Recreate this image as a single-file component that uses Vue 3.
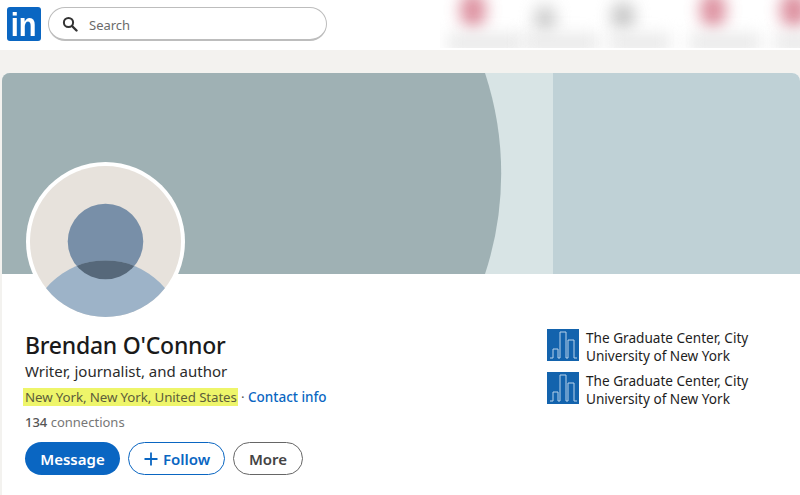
<script setup>
const schools = [
  { id: 1, name: 'The Graduate Center, City University of New York' },
  { id: 2, name: 'The Graduate Center, City University of New York' }
]

const blobs = [
  { id: 1, left: 20, top: -8, w: 26, h: 36, color: '#d67a8c' },
  { id: 2, left: 94, top: 5, w: 22, h: 28, color: '#c4c4c4' },
  { id: 3, left: 171, top: 2, w: 24, h: 28, color: '#bcbcbc' },
  { id: 4, left: 260, top: -8, w: 26, h: 36, color: '#d67a8c' },
  { id: 5, left: 340, top: -8, w: 28, h: 36, color: '#d67a8c' }
]

const smudges = [
  { id: 1, left: 8, w: 74 },
  { id: 2, left: 84, w: 74 },
  { id: 3, left: 170, w: 60 },
  { id: 4, left: 250, w: 70 },
  { id: 5, left: 335, w: 40 }
]
</script>

<template>
  <div class="page">
    <header class="topbar">
      <div class="logo"><span>in</span></div>
      <div class="search">
        <svg class="search-icon" viewBox="0 0 16 16" width="16" height="16">
          <circle cx="6.5" cy="6.5" r="4.6" fill="none" stroke="#333" stroke-width="2" />
          <path d="M10 10l4.5 4.5" stroke="#333" stroke-width="2.4" stroke-linecap="round" />
        </svg>
        <span>Search</span>
      </div>
      <div class="blurred">
        <span
          v-for="b in blobs"
          :key="b.id"
          class="blob"
          :style="{ left: b.left + 'px', top: b.top + 'px', width: b.w + 'px', height: b.h + 'px', background: b.color }"
        ></span>
        <span
          v-for="s in smudges"
          :key="s.id"
          class="smudge"
          :style="{ left: s.left + 'px', width: s.w + 'px' }"
        ></span>
      </div>
    </header>

    <main class="content">
      <section class="card">
        <svg class="banner" viewBox="0 0 798 201" width="798" height="201" preserveAspectRatio="none">
          <rect width="798" height="201" fill="#bfd1d6" />
          <rect width="551" height="201" fill="#d8e4e5" />
          <path d="M0 0H483A320 320 0 0 1 483 201H0Z" fill="#9fb1b4" />
        </svg>

        <div class="body">
          <div class="left">
            <svg class="avatar" viewBox="0 0 160 160" width="159" height="159">
              <defs>
                <clipPath id="inner"><circle cx="80" cy="80" r="76" /></clipPath>
                <clipPath id="head"><circle cx="80" cy="80" r="38" /></clipPath>
              </defs>
              <circle cx="80" cy="80" r="80" fill="#fff" />
              <g clip-path="url(#inner)">
                <rect width="160" height="160" fill="#e7e2dc" />
                <circle cx="80" cy="80" r="38" fill="#788fa8" />
                <circle cx="80" cy="177" r="78" fill="#9db3c8" />
                <circle cx="80" cy="177" r="78" fill="#56687a" clip-path="url(#head)" />
              </g>
            </svg>
            <h1 class="name">Brendan O'Connor</h1>
            <p class="headline">Writer, journalist, and author</p>
            <p class="location">
              <mark>New York, New York, United States</mark>
              <span class="dot"> · </span>
              <a class="contact">Contact info</a>
            </p>
            <p class="connections"><b>134</b> connections</p>
            <div class="actions">
              <button type="button" class="btn primary">Message</button>
              <button type="button" class="btn outline">
                <svg viewBox="0 0 16 16" width="16" height="16">
                  <path d="M8 1.5v13M1.5 8h13" stroke="#0a66c2" stroke-width="1.8" />
                </svg>
                Follow
              </button>
              <button type="button" class="btn ghost">More</button>
            </div>
          </div>

          <ul class="schools">
            <li v-for="s in schools" :key="s.id" class="school">
              <svg class="school-logo" viewBox="0 0 32 32" width="32" height="32">
                <rect width="32" height="32" fill="#1363ad" />
                <path
                  d="M3 29H6V20H11V29H13V3H19V29H21V11H27V29H30"
                  fill="none"
                  stroke="#b9d3ea"
                  stroke-width="1"
                />
              </svg>
              <span>{{ s.name }}</span>
            </li>
          </ul>
        </div>
      </section>
    </main>
  </div>
</template>

<style scoped>
.page {
  width: 800px;
  height: 495px;
  overflow: hidden;
  background: #f3f2ef;
  font-family: "Noto Sans", "Open Sans", sans-serif;
  color: #1d1d1d;
}

.topbar {
  position: relative;
  height: 50px;
  background: #fff;
  display: flex;
  align-items: flex-start;
  gap: 7px;
  padding: 7px;
  box-sizing: border-box;
  overflow: hidden;
}

.logo {
  width: 34px;
  height: 34px;
  box-sizing: border-box;
  padding-top: 1px;
  border-radius: 3px;
  background: #0a66c2;
  color: #fff;
  font: 700 33px/33px "Liberation Sans", sans-serif;
  text-align: center;
}

.logo span {
  display: inline-block;
  transform: scaleX(0.88);
}

.search {
  width: 279px;
  height: 34px;
  box-sizing: border-box;
  border: 1px solid #bdbdbd;
  border-bottom-width: 2px;
  border-radius: 17px;
  display: flex;
  align-items: center;
  gap: 11px;
  padding-left: 13px;
  color: #6b6b6b;
  font-size: 13px;
}

.search span {
  position: relative;
  top: 1px;
}

.search-icon {
  flex: none;
}

.blurred {
  position: absolute;
  left: 440px;
  top: 0;
  width: 360px;
  height: 48px;
  overflow: hidden;
}

.blob {
  position: absolute;
  border-radius: 50%;
  opacity: 0.85;
  filter: blur(8px);
}

.smudge {
  position: absolute;
  top: 34px;
  height: 18px;
  background: #e8e8e8;
  filter: blur(8px);
}

.content {
  padding: 23px 0 0 2px;
}

.card {
  width: 798px;
  height: 422px;
  background: #fff;
  border-radius: 8px 8px 0 0;
  overflow: hidden;
}

.banner {
  display: block;
}

.body {
  display: flex;
  justify-content: space-between;
}

.left {
  padding-left: 23px;
}

.avatar {
  display: block;
  margin: -112px 0 0 1px;
  position: relative;
}

.name {
  margin: 9px 0 0;
  font-size: 23px;
  line-height: 30px;
  font-weight: 550;
  letter-spacing: -0.25px;
  color: #1a1a1a;
}

.headline {
  margin: 1px 0 0;
  font-size: 15px;
  line-height: 20px;
  color: #2b2b2b;
}

.location {
  margin: 7px 0 0;
  font-size: 13.3px;
  line-height: 18px;
  letter-spacing: -0.1px;
  color: #555;
  display: flex;
  white-space: pre;
}

.location mark {
  background: #eef56a;
  color: #5d5d3a;
  margin-left: -2px;
  padding: 0 1px 0 2px;
}

.contact {
  color: #0a66c2;
  font-size: 13.5px;
  font-weight: 500;
  letter-spacing: 0;
}

.connections {
  margin: 7px 0 0;
  font-size: 13px;
  line-height: 18px;
  color: #777;
}

.connections b {
  font-weight: 500;
  color: #555;
}

.actions {
  display: flex;
  gap: 8px;
  margin-top: 11px;
}

.btn {
  height: 33px;
  box-sizing: border-box;
  border-radius: 17px;
  padding: 0;
  font-family: inherit;
  font-size: 15px;
  font-weight: 600;
  display: flex;
  align-items: center;
  justify-content: center;
  gap: 4px;
  background: #fff;
}

.primary {
  width: 95px;
  background: #0a66c2;
  border: 0;
  color: #fff;
}

.outline {
  width: 97px;
  border: 1px solid #0a66c2;
  color: #0a66c2;
}

.ghost {
  width: 70px;
  border: 1px solid #666;
  color: #444;
}

.schools {
  list-style: none;
  margin: 0;
  padding: 55px 36px 0 0;
  width: 217px;
  box-sizing: content-box;
  display: flex;
  flex-direction: column;
  gap: 7px;
}

.school {
  display: flex;
  gap: 7px;
  font-size: 13.6px;
  line-height: 18px;
  color: #1d1d1d;
}

.school-logo {
  flex: none;
}
</style>
